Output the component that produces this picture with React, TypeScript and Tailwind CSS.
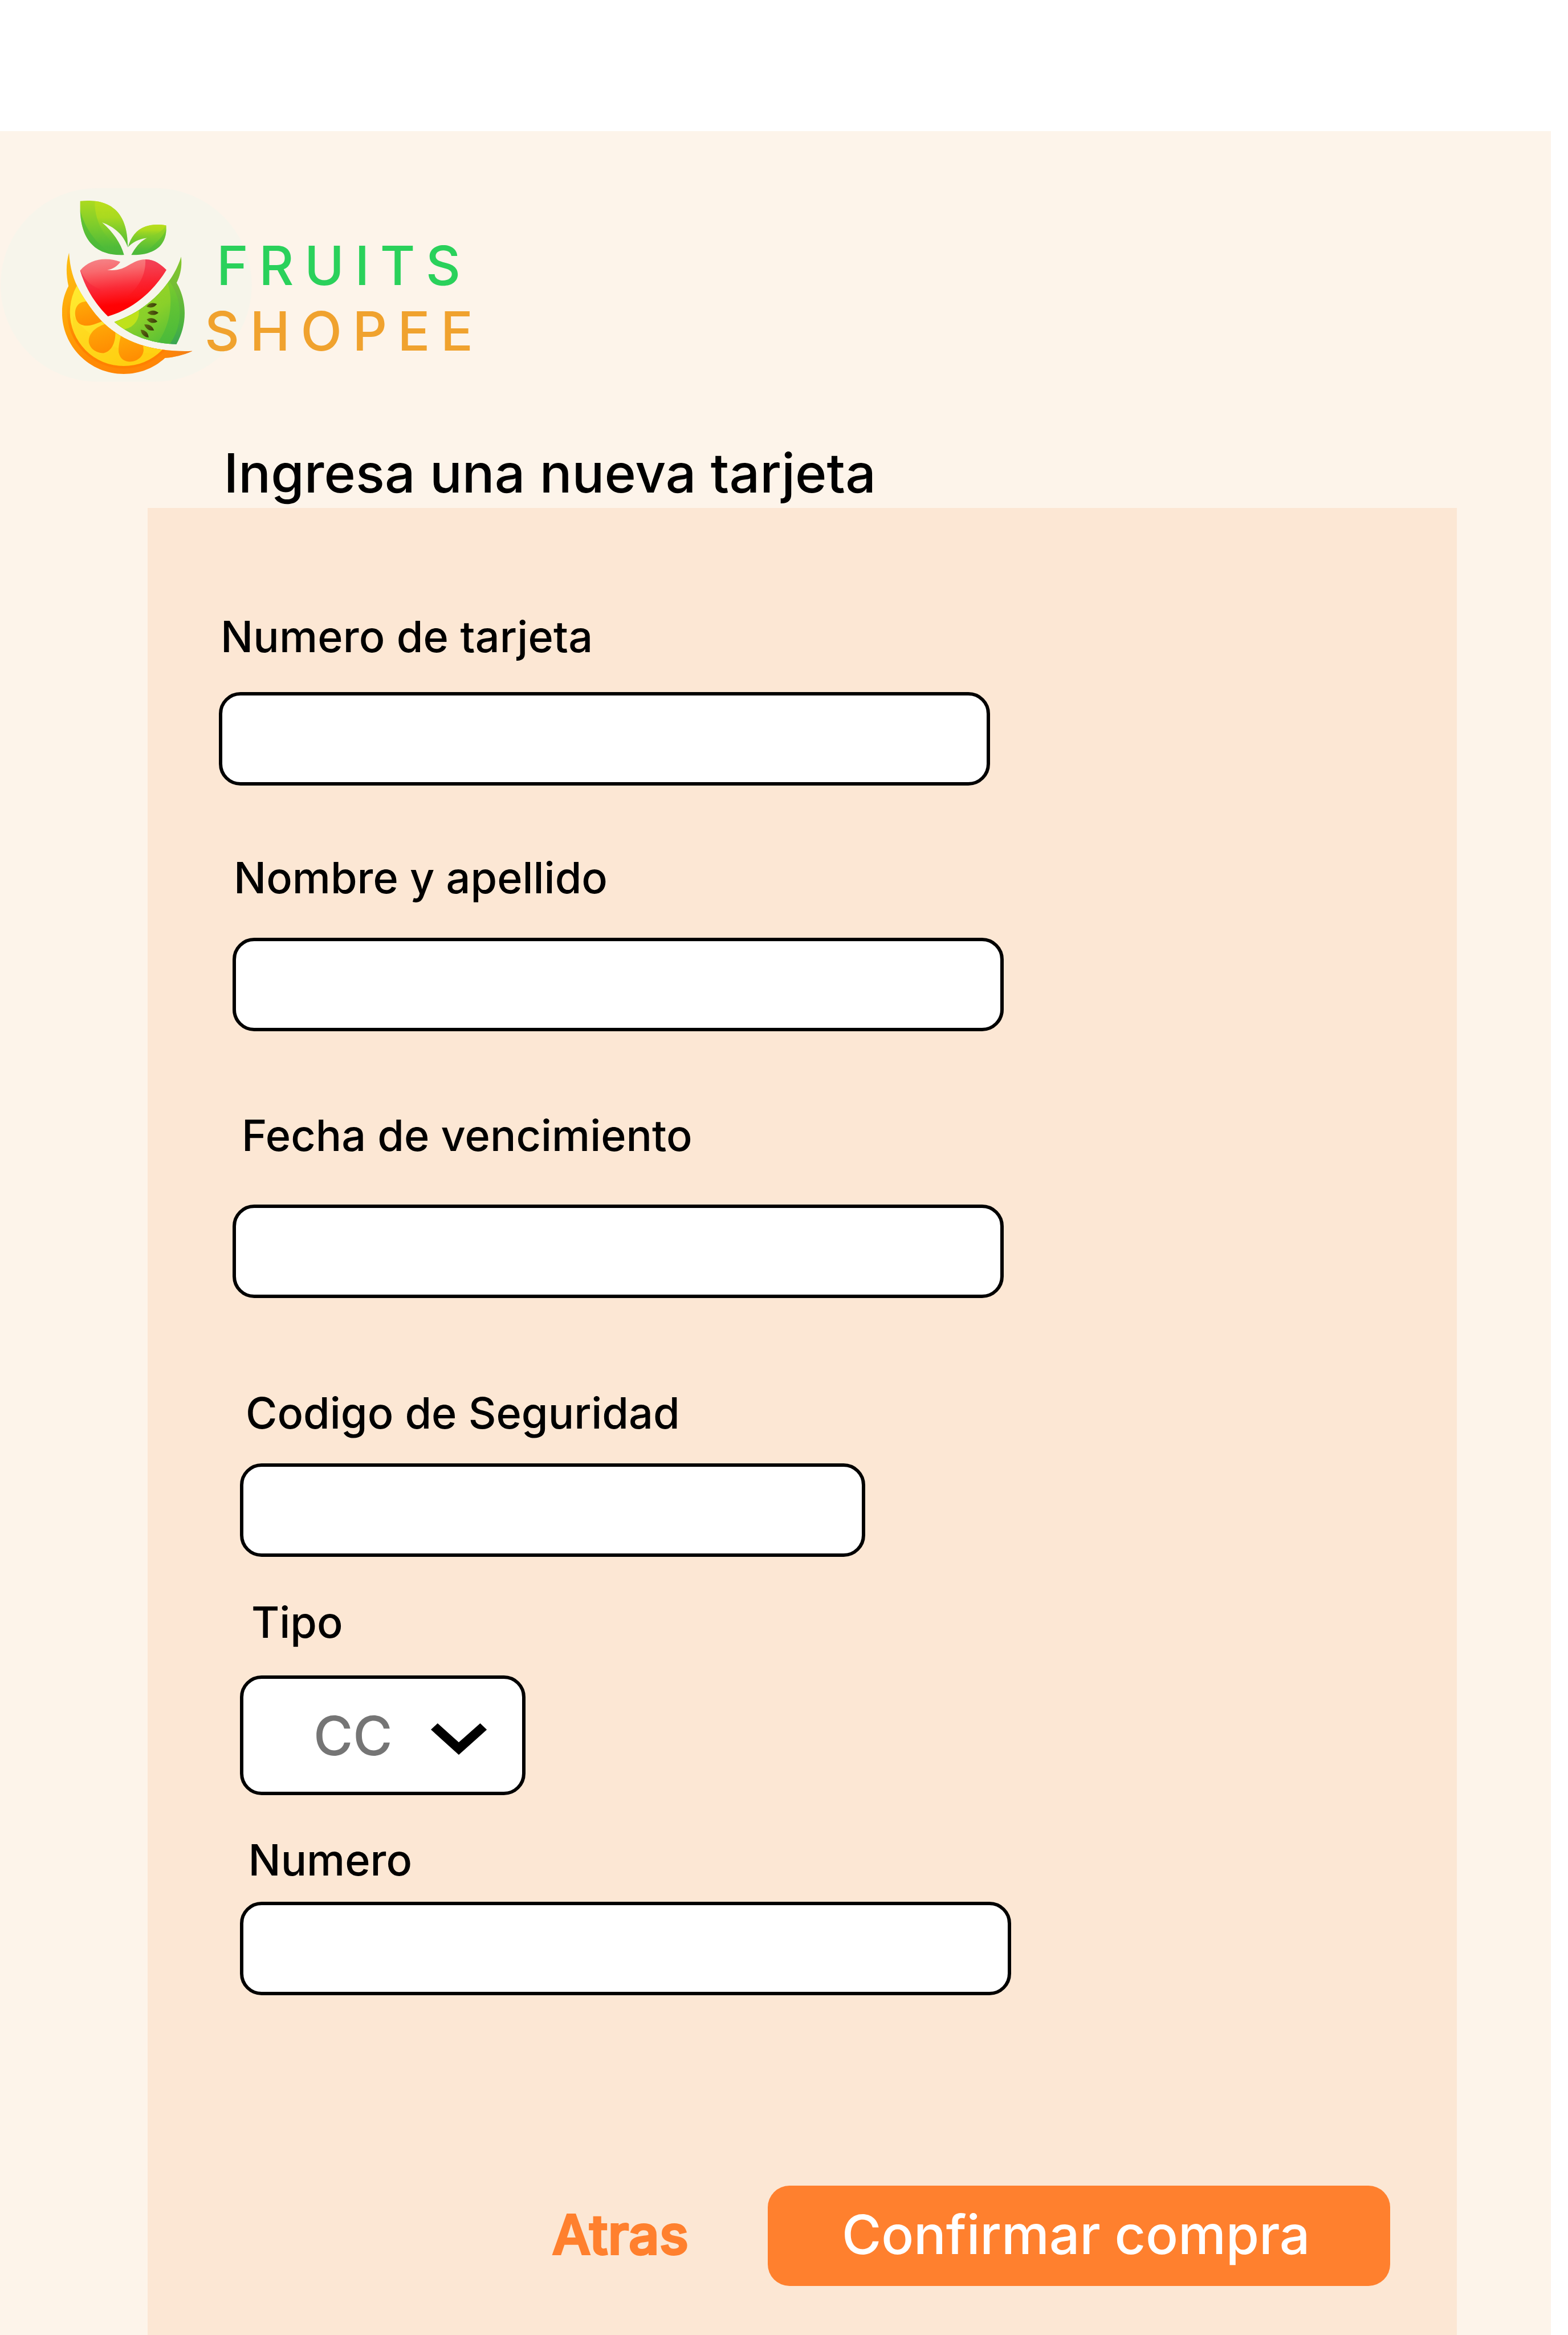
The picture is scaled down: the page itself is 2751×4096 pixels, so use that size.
import React from "react";

function Logo() {
  return (
    <svg viewBox="0 0 1440 1260" className="h-[397px] w-[453px] shrink-0" aria-hidden="true">
      <defs>
        <linearGradient id="leaf" x1="0" y1="0" x2="0" y2="1">
          <stop offset="0" stopColor="#aedb1f" />
          <stop offset="0.45" stopColor="#7fcd2b" />
          <stop offset="0.85" stopColor="#4fbb39" />
          <stop offset="1" stopColor="#4cb93a" />
        </linearGradient>
        <linearGradient id="leafLight" x1="0" y1="0" x2="0" y2="1">
          <stop offset="0" stopColor="#c2e11a" />
          <stop offset="0.35" stopColor="#b3dc1d" />
          <stop offset="0.9" stopColor="#5cc035" stopOpacity="0" />
        </linearGradient>
        <linearGradient id="apple" x1="0.35" y1="0" x2="0.5" y2="1">
          <stop offset="0" stopColor="#f58488" />
          <stop offset="0.2" stopColor="#f86a6e" />
          <stop offset="0.5" stopColor="#fb2a36" />
          <stop offset="0.78" stopColor="#ff0204" />
          <stop offset="1" stopColor="#ff0000" />
        </linearGradient>
        <linearGradient id="appleSide" x1="0" y1="0" x2="0" y2="1">
          <stop offset="0" stopColor="#ee3250" />
          <stop offset="0.6" stopColor="#fb1424" stopOpacity="0.7" />
          <stop offset="1" stopColor="#ff0000" stopOpacity="0" />
        </linearGradient>
        <linearGradient id="appleShade" x1="0" y1="0" x2="0.3" y2="1">
          <stop offset="0" stopColor="#ee2e50" stopOpacity="0.8" />
          <stop offset="1" stopColor="#ff1020" stopOpacity="0" />
        </linearGradient>
        <linearGradient id="rind" x1="0" y1="0" x2="0.4" y2="1">
          <stop offset="0" stopColor="#fcc016" />
          <stop offset="0.3" stopColor="#feb00c" />
          <stop offset="0.6" stopColor="#ff9e06" />
          <stop offset="0.85" stopColor="#ff8a04" />
          <stop offset="1" stopColor="#ff8606" />
        </linearGradient>
        <linearGradient id="rindInner" x1="0" y1="0" x2="0" y2="1">
          <stop offset="0.4" stopColor="#ff8200" stopOpacity="0" />
          <stop offset="0.75" stopColor="#ff7e00" stopOpacity="0.85" />
        </linearGradient>
        <linearGradient id="rindTip" x1="0" y1="0" x2="1" y2="0">
          <stop offset="0" stopColor="#ff8606" stopOpacity="0" />
          <stop offset="1" stopColor="#ee7d20" />
        </linearGradient>
        <linearGradient id="pulp" x1="0" y1="0" x2="0.5" y2="1">
          <stop offset="0" stopColor="#fff132" />
          <stop offset="0.5" stopColor="#ffe32a" />
          <stop offset="1" stopColor="#ffd212" />
        </linearGradient>
        <linearGradient id="segment" x1="0" y1="0" x2="0.3" y2="1">
          <stop offset="0" stopColor="#ffac08" />
          <stop offset="1" stopColor="#ff8e02" />
        </linearGradient>
        <linearGradient id="kiwiSkin" x1="0" y1="0" x2="0" y2="1">
          <stop offset="0" stopColor="#86c92c" />
          <stop offset="0.35" stopColor="#74bd36" />
          <stop offset="0.75" stopColor="#4db43e" />
          <stop offset="1" stopColor="#38a455" />
        </linearGradient>
        <linearGradient id="kiwi" x1="0.5" y1="0" x2="0.75" y2="1">
          <stop offset="0.1" stopColor="#96d426" />
          <stop offset="0.5" stopColor="#62c334" />
          <stop offset="0.8" stopColor="#4cbb3a" />
        </linearGradient>
        <linearGradient id="kiwiCore" x1="0.2" y1="0" x2="0.8" y2="1">
          <stop offset="0" stopColor="#a2d922" />
          <stop offset="0.6" stopColor="#90d228" />
          <stop offset="1" stopColor="#5cc135" />
        </linearGradient>
        <linearGradient id="seed" x1="0" y1="0" x2="1" y2="0">
          <stop offset="0" stopColor="#5f6a12" />
          <stop offset="1" stopColor="#3a3c0a" />
        </linearGradient>
        <clipPath id="bigLeafClip">
          <path d="M447 160 C600 145 714 205 713 420 C692 350 636 302 568 279 C628 330 674 395 692 461 C500 466 440 340 447 160Z" />
        </clipPath>
        <clipPath id="smallLeafClip">
          <path d="M927 296 C806 275 738 328 714 417 C740 388 778 370 820 366 C782 384 754 420 732 461 C862 463 934 410 927 296Z" />
        </clipPath>
        <clipPath id="appleClip">
          <path d="M447 547 C500 484 590 468 671 499 C656 522 632 540 598 544 C710 556 722 488 812 485 C862 484 900 516 928 544 C856 660 750 760 602 803 C532 735 478 650 447 547Z" />
        </clipPath>
        <clipPath id="orangeClip">
          <path d="M385 448 C392 560 420 630 480 718 C560 840 700 1010 1073 996 C1020 1020 970 1031 920 1035 C860 1090 780 1124 690 1124 C500 1124 346 970 346 780 C346 725 360 675 382 635 C368 570 367 510 385 448Z" />
        </clipPath>
        <clipPath id="pulpClip">
          <circle cx="690" cy="780" r="300" />
        </clipPath>
        <clipPath id="kiwiClip">
          <path d="M1010 470 C985 560 880 750 638 834 C740 920 860 955 984 959 C1045 850 1045 720 985 616 C1008 570 1016 520 1010 470Z" />
        </clipPath>
      </defs>
      <rect x="3" y="88" width="1401" height="1079" rx="539" fill="#f7f5eb" />
      <g clipPath="url(#bigLeafClip)">
        <rect x="440" y="150" width="280" height="315" fill="url(#leaf)" />
        <path d="M530 150 C520 270 590 400 720 440 L720 150Z" fill="url(#leafLight)" opacity="0.75" />
        <path d="M440 180 C460 300 540 410 640 465 L440 465Z" fill="#49b93a" opacity="0.6" />
      </g>
      <g clipPath="url(#smallLeafClip)">
        <rect x="705" y="280" width="230" height="185" fill="url(#leaf)" />
        <path d="M930 292 C900 345 820 370 710 400 L710 280Z" fill="url(#leafLight)" opacity="0.8" />
        <path d="M932 300 C915 370 850 400 800 465 L935 465Z" fill="#49b93a" opacity="0.45" />
      </g>
      <g clipPath="url(#appleClip)">
        <rect x="440" y="475" width="495" height="335" fill="url(#apple)" />
        <path d="M810 475 C818 560 780 640 700 700 L940 640 L940 475Z" fill="url(#appleSide)" opacity="0.75" />
        <path d="M445 535 C462 590 500 630 560 652 L560 800 L440 800Z" fill="url(#appleShade)" />
      </g>
      <g clipPath="url(#orangeClip)">
        <rect x="340" y="440" width="740" height="690" fill="url(#rind)" />
        <circle cx="690" cy="778" r="316" fill="url(#rindInner)" />
        <rect x="860" y="980" width="220" height="70" fill="url(#rindTip)" />
        <circle cx="690" cy="780" r="300" fill="url(#pulp)" />
        <g clipPath="url(#pulpClip)">
          <path d="M410 800 C500 940 680 1020 920 1010 L900 1100 L380 1100Z" fill="#fdc20e" opacity="0.22" />
        </g>
        <path d="M500 719 C440 716 419 745 419 790 C422 838 448 856 486 855 C520 853 545 840 590 822 L560 760Z" fill="url(#segment)" />
        <path d="M655 850 C600 835 570 848 540 868 C510 888 494 915 495 945 C500 982 535 1008 576 1008 C625 1000 648 940 643 880Z" fill="url(#segment)" />
        <path d="M678 900 C662 950 660 985 662 1005 C670 1040 695 1056 725 1056 C765 1054 798 1030 801 990 L795 940Z" fill="url(#segment)" />
      </g>
      <g clipPath="url(#kiwiClip)">
        <rect x="630" y="460" width="410" height="510" fill="url(#kiwiSkin)" />
        <circle cx="700" cy="784" r="302" fill="url(#kiwi)" />
        <path d="M925 590 C970 690 960 850 870 960 L620 960 L620 700Z" fill="url(#kiwiCore)" opacity="0.85" />
        <circle cx="679" cy="780" r="96" fill="#bfe11a" />
      </g>
      <g fill="url(#seed)">
        <path d="M-30 3 Q-4 -24 30 -3 Q4 24 -30 3Z" transform="translate(846 741) rotate(-8)" />
        <path d="M-31 0 Q0 -25 31 0 Q0 25 -31 0Z" transform="translate(853 783)" />
        <path d="M-31 0 Q0 -26 31 0 Q0 26 -31 0Z" transform="translate(848 826) rotate(12)" />
        <path d="M-32 0 Q0 -26 32 0 Q0 26 -32 0Z" transform="translate(832 865) rotate(31)" />
        <path d="M-31 0 Q0 -26 31 0 Q0 26 -31 0Z" transform="translate(807 899) rotate(44)" />
      </g>
    </svg>
  );
}

const labelClass = "text-[75.57px] leading-[91px] whitespace-nowrap";
const fieldClass = "h-[164px] rounded-[38px] border-6 border-black bg-white outline-none";

export default function App() {
  return (
    <div className="h-[4096px] w-[2751px] overflow-hidden bg-white pt-[230px] font-['Inter',sans-serif] font-medium text-black">
      <main className="flex h-[3866px] w-[2721px] flex-col bg-[#fdf4ea]">
        <header className="flex h-[542px] items-start pt-[72px]">
          <Logo />
          <div className="-ml-[94px] flex flex-col pt-[106px] text-[94.47px] leading-[115px] tracking-[18.55px]">
            <span className="pl-[21px] text-[#2ad15b]">FRUITS</span>
            <span className="text-[#f0a22e]">SHOPEE</span>
          </div>
        </header>
        <h1 className="h-[119px] pl-[392.5px] text-[94.47px] leading-[115px] tracking-[0.05px] whitespace-nowrap">
          Ingresa una nueva tarjeta
        </h1>
        <form className="ml-[259px] flex h-[3205px] w-[2297px] flex-col items-start bg-[#fce7d4] pt-[180px]">
          <label className={`${labelClass} ml-[128px] tracking-[0.15px]`}>Numero de tarjeta</label>
          <input className={`${fieldClass} mt-[52px] ml-[125px] w-[1353px]`} />

          <label className={`${labelClass} mt-[116px] ml-[151px]`}>Nombre y apellido</label>
          <input className={`${fieldClass} mt-[60px] ml-[149px] w-[1353px]`} />

          <label className={`${labelClass} mt-[137px] ml-[165px]`}>Fecha de vencimiento</label>
          <input className={`${fieldClass} mt-[76px] ml-[149px] w-[1353px]`} />

          <label className={`${labelClass} mt-[156px] ml-[172px]`}>Codigo de Seguridad</label>
          <input className={`${fieldClass} mt-[43px] ml-[162px] w-[1097px]`} />

          <label className={`${labelClass} mt-[69px] ml-[182px]`}>Tipo</label>
          <button
            type="button"
            className="mt-[48px] ml-[162px] flex h-[210px] w-[501px] items-center rounded-[38px] border-6 border-black bg-white pl-[123px]"
          >
            <span className="text-[94.47px] leading-[115px] text-[#757575]">CC</span>
            <svg viewBox="0 0 104 58.6" className="mt-[14px] ml-[67px] h-[55.4px] w-[98.2px]" aria-hidden="true">
              <path d="M12.5 0 L0 11.7 L51.8 58.6 L104 11.7 L91.6 0 L51.8 35.3Z" fill="#000" />
            </svg>
          </button>

          <label className={`${labelClass} mt-[68px] ml-[176.5px]`}>Numero</label>
          <input className={`${fieldClass} mt-[28px] ml-[162px] w-[1353px]`} />

          <div className="mt-[334px] flex h-[176px] w-full items-center text-[94.47px] leading-[115px]">
            <button
              type="button"
              className="ml-[710px] w-[378px] pb-[5px] text-left tracking-[0.3px] text-[#ff802e] [-webkit-text-stroke:4px_#ff802e]"
            >
              Atras
            </button>
            <button
              type="submit"
              className="h-[176px] w-[1092px] rounded-[38px] bg-[#ff802e] pb-[5px] pl-[130px] text-left tracking-[-0.15px] text-white"
            >
              Confirmar compra
            </button>
          </div>
        </form>
      </main>
    </div>
  );
}
